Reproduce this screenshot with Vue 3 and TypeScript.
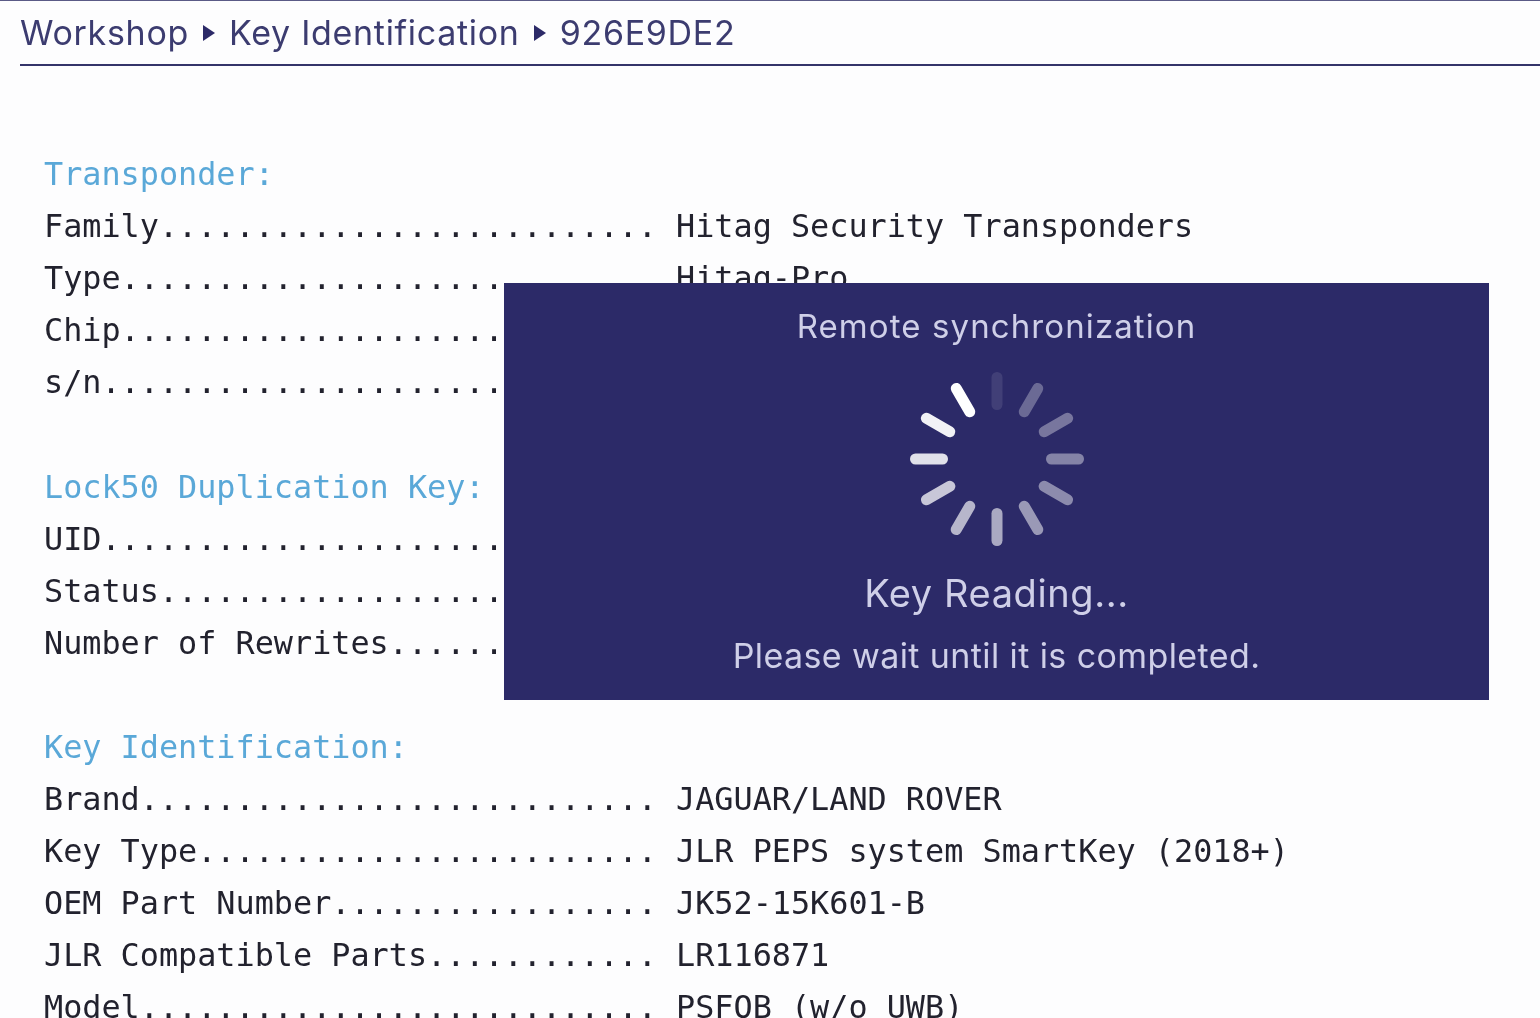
<script setup lang="ts">
interface Row { label: string; value?: string }
interface Section { title: string; rows: Row[] }

const WIDTH = 32
const sections: Section[] = [
  {
    title: 'Transponder:',
    rows: [
      { label: 'Family', value: 'Hitag Security Transponders' },
      { label: 'Type', value: 'Hitag-Pro' },
      { label: 'Chip' },
      { label: 's/n' },
    ],
  },
  {
    title: 'Lock50 Duplication Key:',
    rows: [{ label: 'UID' }, { label: 'Status' }, { label: 'Number of Rewrites' }],
  },
  {
    title: 'Key Identification:',
    rows: [
      { label: 'Brand', value: 'JAGUAR/LAND ROVER' },
      { label: 'Key Type', value: 'JLR PEPS system SmartKey (2018+)' },
      { label: 'OEM Part Number', value: 'JK52-15K601-B' },
      { label: 'JLR Compatible Parts', value: 'LR116871' },
      { label: 'Model', value: 'PSFOB (w/o UWB)' },
    ],
  },
]

const line = (r: Row): string =>
  r.label + '.'.repeat(WIDTH - r.label.length) + (r.value ? ' ' + r.value : '')

const opacities = [0.1, 0.3, 0.36, 0.42, 0.46, 0.52, 0.6, 0.66, 0.74, 0.86, 0.94, 1]
const bars = opacities.map((opacity, i) => ({ angle: i * 30, opacity }))
</script>

<template>
  <div class="page">
    <header class="crumbs">
      <span>Workshop</span>
      <svg class="arrow" viewBox="0 0 12 16"><path d="M0 0 L12 8 L0 16 Z" /></svg>
      <span>Key Identification</span>
      <svg class="arrow" viewBox="0 0 12 16"><path d="M0 0 L12 8 L0 16 Z" /></svg>
      <span>926E9DE2</span>
    </header>

    <main class="report">
      <section v-for="s in sections" :key="s.title" class="section">
        <div class="title">{{ s.title }}</div>
        <div v-for="r in s.rows" :key="r.label" class="row">{{ line(r) }}</div>
      </section>
    </main>

    <div class="overlay">
      <div class="overlay-title">Remote synchronization</div>
      <svg class="spinner" viewBox="-90 -90 180 180">
        <rect
          v-for="b in bars"
          :key="b.angle"
          x="-5.5"
          y="-87"
          width="11"
          height="38"
          rx="5.5"
          fill="#ffffff"
          :opacity="b.opacity"
          :transform="`rotate(${b.angle})`"
        />
      </svg>
      <div class="overlay-status">Key Reading...</div>
      <div class="overlay-note">Please wait until it is completed.</div>
    </div>
  </div>
</template>

<style scoped>
.page {
  position: relative;
  width: 1540px;
  height: 1018px;
  overflow: hidden;
  box-sizing: border-box;
  background: #fdfdfe;
  border-top: 1px solid #5a5a86;
  filter: blur(0.5px);
}
.crumbs {
  display: flex;
  align-items: center;
  gap: 14px;
  height: 65px;
  box-sizing: border-box;
  margin-left: 20px;
  border-bottom: 2px solid #34346a;
  font-family: Inter, "Open Sans", sans-serif;
  font-size: 34px;
  letter-spacing: 0.7px;
  color: #3c3c70;
}
.arrow {
  width: 12px;
  height: 16px;
  fill: #2c2a68;
  flex: none;
}
.report {
  padding: 82px 0 0 44px;
  font-family: "DejaVu Sans Mono", monospace;
  font-size: 31.82px;
  line-height: 52px;
  color: #22222e;
  white-space: pre;
}
.section {
  margin-bottom: 52px;
}
.section:first-child {
  margin-bottom: 53px;
}
.title {
  color: #5aa8d8;
}
.overlay {
  position: absolute;
  left: 504px;
  top: 282px;
  width: 985px;
  height: 417px;
  background: #2c2a68;
  display: flex;
  flex-direction: column;
  align-items: center;
  font-family: Inter, "Open Sans", sans-serif;
  color: #cfcfe8;
}
.overlay-title {
  margin-top: 22px;
  font-size: 33px;
  line-height: 42px;
  letter-spacing: 1.1px;
}
.spinner {
  width: 180px;
  height: 180px;
  margin-top: 22px;
}
.overlay-status {
  margin-top: 20px;
  font-size: 38px;
  line-height: 48px;
  letter-spacing: 0.6px;
}
.overlay-note {
  margin-top: 18px;
  font-size: 34px;
  line-height: 42px;
  letter-spacing: 0.4px;
}
</style>
